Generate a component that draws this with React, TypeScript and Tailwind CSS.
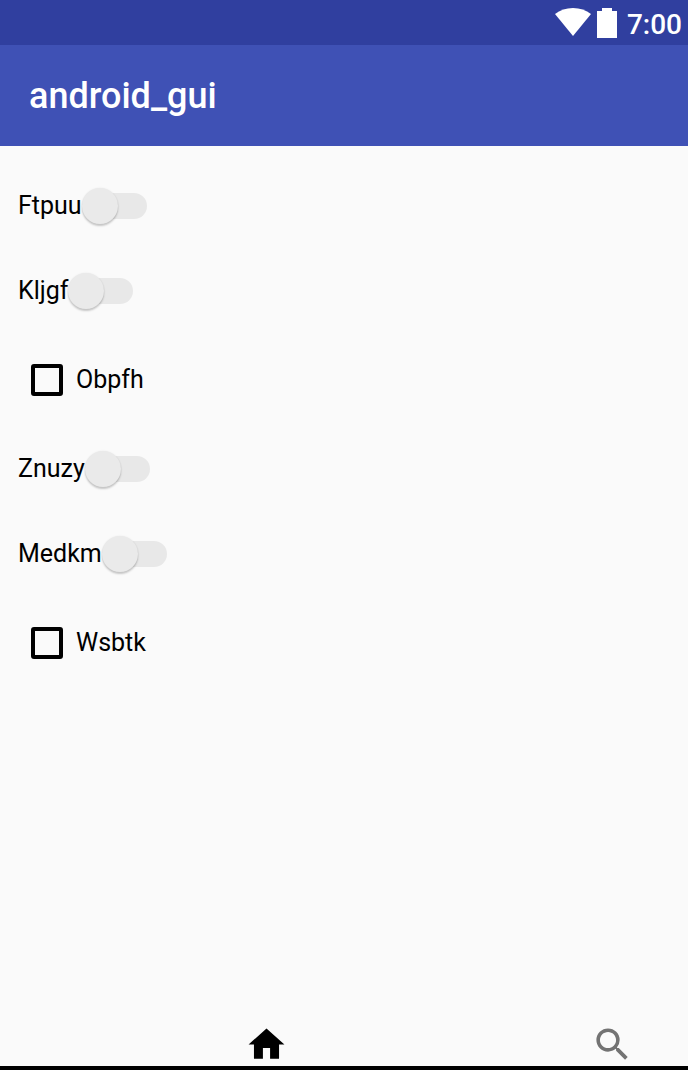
import { useState } from "react";

type Option = { kind: "switch" | "check"; label: string };

const options: Option[] = [
  { kind: "switch", label: "Ftpuu" },
  { kind: "switch", label: "Kljgf" },
  { kind: "check", label: "Obpfh" },
  { kind: "switch", label: "Znuzy" },
  { kind: "switch", label: "Medkm" },
  { kind: "check", label: "Wsbtk" },
];

function StatusBar() {
  return (
    <div className="flex h-[45px] items-center justify-end bg-[#303f9f] pr-1.5 text-white">
      <svg className="mr-1.5 h-[30px] w-9" viewBox="0 0 36 30" fill="currentColor" aria-hidden="true">
        <path d="M18 28 0 6C5 2 11 0 18 0s13 2 18 6z" />
      </svg>
      <svg className="mr-2.5 h-[30px] w-5" viewBox="0 0 20 30" fill="currentColor" aria-hidden="true">
        <path d="M5 0h10v3h5v27H0V3h5z" />
      </svg>
      <span className="pt-1 text-[28px] leading-8 font-medium">7:00</span>
    </div>
  );
}

function SwitchRow({ label }: { label: string }) {
  return (
    <label className="flex h-[85px] w-fit items-center pl-[18px]">
      <span>{label}</span>
      <input
        type="checkbox"
        role="switch"
        className="relative h-9 w-[65px] appearance-none before:absolute before:inset-y-[5px] before:right-0 before:left-3 before:rounded-full before:bg-[#e8e8e8] after:absolute after:top-0 after:left-0 after:size-9 after:rounded-full after:bg-[#eaeaea] after:shadow-[0_2px_2px_rgba(0,0,0,0.2),0_0_2px_rgba(0,0,0,0.08)] checked:before:bg-[#9fa8da] checked:after:left-[29px] checked:after:bg-[#3f51b5]"
      />
    </label>
  );
}

function CheckRow({ label }: { label: string }) {
  return (
    <label className="flex h-[93px] w-fit items-center gap-[13px] pl-[31px]">
      <input
        type="checkbox"
        className="size-8 appearance-none rounded-[3px] border-4 border-black checked:bg-black"
      />
      <span>{label}</span>
    </label>
  );
}

export default function App() {
  const [tab, setTab] = useState("home");
  return (
    <div className="flex min-h-screen flex-col bg-[#fafafa] font-[Roboto,sans-serif] text-black">
      <StatusBar />
      <header className="flex h-[101px] items-center bg-[#3f51b5] px-[29px]">
        <h1 className="text-[36px] leading-10 font-medium text-white">android_gui</h1>
      </header>
      <main className="flex-1 pt-[17px] text-[25px] leading-8">
        {options.map((o) =>
          o.kind === "switch" ? (
            <SwitchRow key={o.label} label={o.label} />
          ) : (
            <CheckRow key={o.label} label={o.label} />
          ),
        )}
      </main>
      <nav className="flex justify-between border-b-4 border-black pr-[54px] pl-[245px]">
        <button
          type="button"
          aria-label="Home"
          onClick={() => setTab("home")}
          className={tab === "home" ? "text-black" : "text-[#737373]"}
        >
          <svg className="block size-[43px]" viewBox="0 0 24 24" fill="currentColor" aria-hidden="true">
            <path d="M10 20v-6h4v6h5v-8h3L12 3 2 12h3v8z" />
          </svg>
        </button>
        <button
          type="button"
          aria-label="Search"
          onClick={() => setTab("search")}
          className={tab === "search" ? "text-black" : "text-[#737373]"}
        >
          <svg className="block size-[43px]" viewBox="0 0 24 24" fill="currentColor" aria-hidden="true">
            <path d="M15.500 14h-.79l-.28-.27A6.471 6.471 0 0 0 16 9.500 6.500 6.500 0 1 0 9.500 16c1.610 0 3.090-.59 4.230-1.570l.27.28v.79l5 4.990L20.490 19l-4.990-5zm-6 0C7.010 14 5 11.990 5 9.500S7.010 5 9.500 5 14 7.010 14 9.500 11.990 14 9.500 14z" />
          </svg>
        </button>
      </nav>
    </div>
  );
}
